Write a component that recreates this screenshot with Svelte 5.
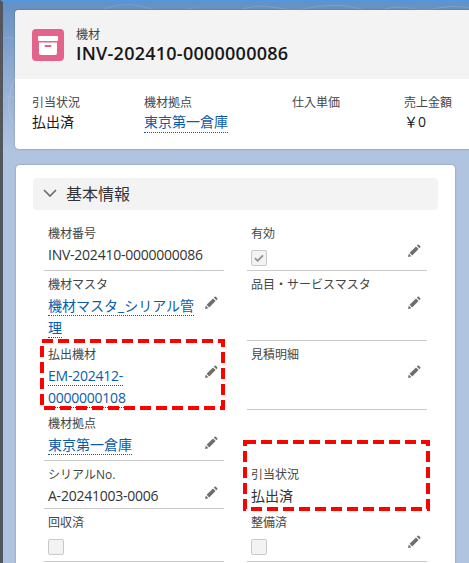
<script>
    const rows = [
        [
            { label: '機材番号', value: 'INV-202410-0000000086' },
            { label: '有効', check: true, checked: true, pen: 24 }
        ],
        [
            { label: '機材マスタ', link: '機材マスタ_シリアル管理', pen: 25, bare: true },
            { label: '品目・サービスマスタ', pen: 25 }
        ],
        [
            { label: '払出機材', link: 'EM-202412-0000000108', pen: 24, bare: true, mark: { w: 185, h: 71, x: -4, y: -2 } },
            { label: '見積明細', pen: 24 }
        ],
        [
            { label: '機材拠点', link: '東京第一倉庫', pen: 26 },
            { bare: true }
        ],
        [
            { label: 'シリアルNo.', value: 'A-20241003-0006', pen: 25 },
            { label: '引当状況', value: '払出済', bare: true, mark: { w: 187, h: 71, x: -4, y: -21 } }
        ],
        [
            { label: '回収済', check: true },
            { label: '整備済', check: true, pen: 26 }
        ]
    ];

    // digits and latin run a little wider than the original font
    const latin = (text) => /^[A-Z]/.test(text);
</script>

<div class="page">
    <svg class="texture" viewBox="0 0 469 150" width="469" height="150">
        <g fill="none" stroke="#fff" stroke-opacity="0.12">
            <path d="M-5 40c20-15 30 10 20 30s-15 40 0 60" />
            <path d="M100 8c20-10 40-4 50 0s30 2 40-2" />
            <path d="M240 7c25-8 40 4 60 0s40-6 60 1" />
            <path d="M380 8c20-8 30 3 50-1s30-3 40 0" />
            <path d="M0 100c4-8 10-8 14 0" />
        </g>
    </svg>
    <section class="highlights">
        <header>
            <div class="icon">
                <svg viewBox="0 0 32 32" width="32" height="32">
                    <rect x="6" y="7" width="20" height="5" rx="1" fill="#fff" />
                    <path d="M7 13.5h18V24a2 2 0 0 1-2 2H9a2 2 0 0 1-2-2z" fill="#fff" />
                    <rect x="12.5" y="16" width="7" height="2" rx="1" fill="#e3648a" />
                </svg>
            </div>
            <div>
                <div class="type">機材</div>
                <h1>INV-202410-0000000086</h1>
            </div>
        </header>
        <div class="summary">
            <div><span>引当状況</span><b>払出済</b></div>
            <div><span>機材拠点</span><a href="#top">東京第一倉庫</a></div>
            <div><span>仕入単価</span></div>
            <div><span>売上金額</span><b class="yen">￥0</b></div>
        </div>
    </section>

    <section class="detail">
        <h2>
            <svg viewBox="0 0 16 16" width="16" height="16">
                <path d="M2 5l6 6 6-6" fill="none" stroke="#706e6b" stroke-width="1.7" />
            </svg>
            基本情報
        </h2>
        <div class="grid">
            {#each rows as row}
                {#each row as f}
                    <div class="field" class:bare={f.bare}>
                        {#if f.label}
                            <div class="label">{f.label}</div>
                        {/if}
                        {#if f.value}
                            <div class="value" class:latin={latin(f.value)}>{f.value}</div>
                        {/if}
                        {#if f.link}
                            <div class="value wrap" class:latin={latin(f.link)}><a href="#top">{f.link}</a></div>
                        {/if}
                        {#if f.check}
                            <div class="box">
                                {#if f.checked}
                                    <svg viewBox="0 0 16 16" width="16" height="16">
                                        <path d="M4 8.2l2.6 2.6L12 5.4" fill="none" stroke="#8f8f8f" stroke-width="1.8" />
                                    </svg>
                                {/if}
                            </div>
                        {/if}
                        {#if f.pen}
                            <svg class="pencil" style="top: {f.pen}px" viewBox="0 0 14 14" width="14" height="14">
                                <path d="M1 13l.8-3.4 2.6 2.6z M2.6 8.8l6.4-6.4 2.6 2.6-6.4 6.4z M9.8 1.6l.9-.9a.8.8 0 0 1 1.1 0l1.5 1.5a.8.8 0 0 1 0 1.1l-.9.9z" fill="#706e6b" />
                            </svg>
                        {/if}
                        {#if f.mark}
                            <svg class="mark" style="left: {f.mark.x}px; top: {f.mark.y}px" width={f.mark.w} height={f.mark.h}>
                                <rect x="2" y="2" width={f.mark.w - 4} height={f.mark.h - 4} fill="none" stroke="#f00" stroke-width="4" stroke-dasharray="11 5" />
                            </svg>
                        {/if}
                    </div>
                {/each}
            {/each}
        </div>
    </section>
</div>

<style>
    :global(body) {
        margin: 0;
        overflow: hidden;
    }

    .page {
        position: relative;
        box-sizing: border-box;
        width: 469px;
        height: 563px;
        overflow: hidden;
        padding: 8px 0 0 12px;
        border-left: 3px solid #53565c;
        border-top: 2px solid #4f97e3;
        font-family: "Open Sans", "Noto Sans CJK JP", sans-serif;
        color: #181818;
        background: linear-gradient(#6590c3 0, #8fabd2 70px, #b0c4df 150px);
    }

    .texture {
        position: absolute;
        left: 0;
        top: 0;
    }

    .highlights {
        position: relative;
        width: 480px;
        height: 139px;
        border-radius: 4px;
        background: #fff;
        box-shadow: 0 0 2px rgba(0, 0, 0, 0.35);
        overflow: hidden;
    }

    header {
        display: flex;
        align-items: center;
        gap: 12px;
        height: 69px;
        box-sizing: border-box;
        padding-left: 17px;
        background: #f3f3f3;
    }

    .icon {
        width: 32px;
        height: 32px;
        border-radius: 4px;
        background: #e3648a;
    }

    .icon svg {
        display: block;
    }

    .type {
        font-size: 12px;
        line-height: 16px;
        color: #444;
    }

    h1 {
        margin: 0;
        font-size: 18px;
        line-height: 20px;
        font-weight: 600;
        letter-spacing: 0.25px;
    }

    .summary {
        display: grid;
        grid-template-columns: 112px 148px 112px 100px;
        padding: 15px 0 0 17px;
        font-size: 12px;
    }

    .summary span {
        display: block;
        line-height: 18px;
        color: #444;
    }

    .summary b {
        display: block;
        font-weight: 400;
        font-size: 14px;
        line-height: 20px;
    }

    .summary a {
        display: inline-block;
        font-size: 14px;
        line-height: 20px;
    }

    a {
        color: #0b5cab;
        text-decoration: none;
        border-bottom: 1px dotted #0b5cab;
    }

    .detail {
        position: relative;
        box-sizing: border-box;
        width: 439px;
        height: 420px;
        margin: 16px 0 0 1px;
        padding: 13px 17px;
        border-radius: 4px;
        background: #fff;
        box-shadow: 0 0 2px rgba(0, 0, 0, 0.3);
    }

    h2 {
        display: flex;
        align-items: center;
        gap: 8px;
        margin: 0;
        height: 32px;
        padding: 0 0 2px 9px;
        box-sizing: border-box;
        border-radius: 4px;
        background: #f3f3f3;
        font-size: 16px;
        font-weight: 400;
        color: #333;
    }

    .grid {
        display: grid;
        grid-template-columns: 180px 180px;
        grid-template-rows: 51px 70px 69px 51px 48px 53px;
        column-gap: 23px;
        margin: 10px 0 0 11px;
    }

    .field {
        position: relative;
        box-sizing: border-box;
        padding: 5px 0 0 4px;
        border-bottom: 1px solid #c9c9c9;
    }

    .field.bare {
        border-bottom-color: transparent;
    }

    .label {
        font-size: 12px;
        line-height: 18px;
        color: #444;
    }

    .value {
        margin-top: 1px;
        font-size: 14px;
        line-height: 22px;
        color: #333;
        white-space: nowrap;
    }

    .value.latin {
        letter-spacing: -0.24px;
    }

    .value.wrap {
        width: 150px;
        white-space: normal;
    }

    .box {
        box-sizing: border-box;
        width: 16px;
        height: 16px;
        margin-top: 7px;
        border: 1px solid #c9c9c9;
        border-radius: 2px;
        background: #f3f3f3;
    }

    .box svg {
        display: block;
        margin: -1px;
    }

    .pencil {
        position: absolute;
        right: 6px;
    }

    .mark {
        position: absolute;
    }
</style>
